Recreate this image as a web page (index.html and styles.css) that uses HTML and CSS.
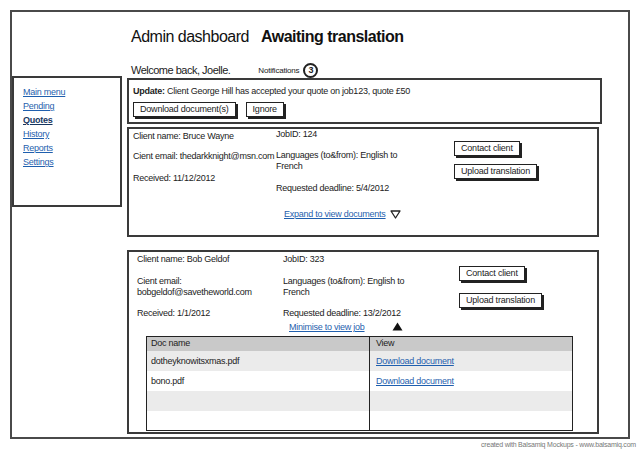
FILE: index.html
```html
<!DOCTYPE html>
<html>
<head>
<meta charset="utf-8">
<link rel="stylesheet" href="styles.css">
</head>
<body>
<div class="frame">
  <h1 class="title"><span class="t1">Admin dashboard</span><span class="t2">Awaiting translation</span></h1>
  <div class="layout">
    <nav class="sidebar">
      <a class="nav-link" href="#">Main menu</a>
      <a class="nav-link" href="#">Pending</a>
      <a class="nav-link active" href="#">Quotes</a>
      <a class="nav-link" href="#">History</a>
      <a class="nav-link" href="#">Reports</a>
      <a class="nav-link" href="#">Settings</a>
    </nav>
    <main class="main">
      <div class="welcome">
        <span class="welcome-text">Welcome back, Joelle.</span>
        <span class="notif">Notifications</span>
        <span class="badge">3</span>
      </div>
      <section class="update">
        <p class="update-text"><b>Update:</b> Client George Hill has accepted your quote on job123, quote £50</p>
        <div class="btn-row">
          <button class="btn">Download document(s)</button>
          <button class="btn">Ignore</button>
        </div>
      </section>

      <section class="card card1">
        <div class="job">
          <div class="col col-left">
            <p class="l1">Client name: Bruce Wayne</p>
            <p class="l2">Cient email: thedarkknight@msn.com</p>
            <p class="l3">Received: 11/12/2012</p>
          </div>
          <div class="col col-mid">
            <p class="m1">JobID: 124</p>
            <p class="m2">Languages (to&amp;from): English to<br>French</p>
            <p class="m3">Requested deadline: 5/4/2012</p>
          </div>
          <div class="col col-btns">
            <button class="btn b1">Contact client</button>
            <button class="btn b2">Upload translation</button>
          </div>
        </div>
        <div class="toggle toggle1">
          <a href="#" class="link">Expand to view documents</a>
          <svg class="tri" width="11" height="9" viewBox="0 0 11 9"><path d="M1 1 L10 1 L5.5 8 Z" fill="none" stroke="#222" stroke-width="1.3" stroke-linejoin="round"/></svg>
        </div>
      </section>

      <section class="card card2">
        <div class="job">
          <div class="col col-left">
            <p class="l1">Client name: Bob Geldof</p>
            <p class="l2">Cient email:<br>bobgeldof@savetheworld.com</p>
            <p class="l3">Received: 1/1/2012</p>
          </div>
          <div class="col col-mid">
            <p class="m1">JobID: 323</p>
            <p class="m2">Languages (to&amp;from): English to<br>French</p>
            <p class="m3">Requested deadline: 13/2/2012</p>
          </div>
          <div class="col col-btns">
            <button class="btn b1">Contact client</button>
            <button class="btn b2">Upload translation</button>
          </div>
        </div>
        <div class="toggle toggle2">
          <a href="#" class="link">Minimise to view job</a>
          <svg class="tri" width="11" height="9" viewBox="0 0 11 9"><path d="M5.5 0.5 L10.5 8.5 L0.5 8.5 Z" fill="#111"/></svg>
        </div>
        <table class="docs">
          <thead>
            <tr><th class="c1">Doc name</th><th class="c2">View</th></tr>
          </thead>
          <tbody>
            <tr class="odd"><td class="c1">dotheyknowitsxmas.pdf</td><td class="c2"><a href="#" class="link">Download document</a></td></tr>
            <tr><td class="c1">bono.pdf</td><td class="c2"><a href="#" class="link">Download document</a></td></tr>
            <tr class="odd"><td class="c1"></td><td class="c2"></td></tr>
            <tr><td class="c1"></td><td class="c2"></td></tr>
          </tbody>
        </table>
      </section>
    </main>
  </div>
</div>
<div class="credit">created with Balsamiq Mockups - www.balsamiq.com</div>
</body>
</html>
```

FILE: styles.css
```css
* { box-sizing: border-box; }
html, body { margin: 0; padding: 0; background: #fff; }
body {
  font-family: "Liberation Sans", Arial, sans-serif;
  color: #222;
  width: 640px;
  height: 451px;
  overflow: hidden;
  letter-spacing: -0.25px;
}
p { margin: 0; white-space: nowrap; }

.frame {
  margin: 10px 0 0 10px;
  width: 620px;
  height: 429px;
  border: 2px solid #4a4a4a;
}

.title {
  margin: 15px 0 0 119px;
  font-size: 16px;
  line-height: 20px;
  font-weight: normal;
  letter-spacing: -0.5px;
  display: flex;
  gap: 12px;
  color: #111;
}
.title .t2 { font-weight: bold; }

.layout {
  display: flex;
  align-items: flex-start;
  margin-top: 15px;
}

.sidebar {
  margin-top: 14px;
  width: 110px;
  height: 131px;
  border: 2px solid #3a3a3a;
  padding: 7px 0 0 9px;
  display: flex;
  flex-direction: column;
  align-items: flex-start;
}
.nav-link {
  font-size: 9px;
  line-height: 14px;
  color: #1f5fae;
  text-decoration: underline;
}
.nav-link.active { color: #16365f; font-weight: bold; }

.main {
  margin-left: 5px;
  width: 475px;
  display: flex;
  flex-direction: column;
}

.welcome {
  height: 16px;
  display: flex;
  align-items: center;
  padding-left: 4px;
}
.welcome-text { font-size: 11px; letter-spacing: -0.5px; }
.notif { font-size: 8px; margin-left: 28px; letter-spacing: -0.2px; }
.badge {
  margin-left: 4px;
  width: 15px;
  height: 15px;
  border: 2px solid #222;
  border-radius: 50%;
  font-size: 9px;
  font-weight: bold;
  display: flex;
  align-items: center;
  justify-content: center;
}

.update {
  width: 475px;
  height: 46px;
  border: 2px solid #3a3a3a;
  padding: 6px 0 0 4px;
}
.update-text { font-size: 9px; line-height: 11px; }
.btn-row { display: flex; gap: 10px; margin-top: 5px; }

.btn {
  font-family: inherit;
  font-size: 9px;
  letter-spacing: -0.2px;
  color: #222;
  background: #fff;
  border: 1.5px solid #222;
  box-shadow: 2px 2px 0 #222;
  height: 15px;
  padding: 0 6px;
  line-height: 11px;
  border-radius: 0;
}

.card {
  width: 472px;
  border: 2px solid #3a3a3a;
}
.card1 { margin-top: 3px; height: 110px; padding-left: 4px; }
.card2 { margin-top: 13px; height: 184px; padding-left: 8px; }

.job { display: flex; font-size: 9px; line-height: 11px; }
.col { display: flex; flex-direction: column; align-items: flex-start; }

.card1 .col-left { width: 143px; }
.card1 .col-mid { width: 178px; }
.card1 .l1 { margin-top: 2px; }
.card1 .l2 { margin-top: 9px; }
.card1 .l3 { margin-top: 11px; }
.card1 .m1 { margin-top: 0; }
.card1 .m2 { margin-top: 10px; }
.card1 .m3 { margin-top: 11px; }
.card1 .b1 { margin-top: 12px; }
.card1 .b2 { margin-top: 8px; }

.card2 .col-left { width: 146px; }
.card2 .col-mid { width: 176px; }
.card2 .l1 { margin-top: 2px; }
.card2 .l2 { margin-top: 11px; }
.card2 .l3 { margin-top: 10px; }
.card2 .m1 { margin-top: 2px; }
.card2 .m2 { margin-top: 11px; }
.card2 .m3 { margin-top: 10px; }
.card2 .b1 { margin-top: 14px; }
.card2 .b2 { margin-top: 12px; }

.toggle { display: flex; align-items: center; font-size: 9px; line-height: 11px; }
.toggle .tri { margin-left: 4px; }
.toggle1 { margin: 15px 0 0 151px; }
.toggle2 { margin: 3px 0 0 152px; }
.toggle2 .tri { margin-left: 27px; margin-top: -3px; }

.link { color: #1f5fae; text-decoration: underline; }

.docs {
  margin: 3px 0 0 9px;
  width: 427px;
  border-collapse: collapse;
  border: 1.5px solid #222;
  font-size: 9px;
}
.docs th, .docs td { padding: 0 0 0 4px; text-align: left; font-weight: normal; }
.docs th { background: #c9c9c9; height: 14px; line-height: 11px; }
.docs td { height: 20px; }
.docs .c1 { width: 223px; border-right: 1.5px solid #222; }
.docs .c2 { padding-left: 6px; }
.docs tr.odd td { background: #ebebeb; }

.credit {
  text-align: right;
  padding-right: 4px;
  margin-top: 2px;
  font-size: 7px;
  letter-spacing: -0.2px;
  color: #777;
}
```
